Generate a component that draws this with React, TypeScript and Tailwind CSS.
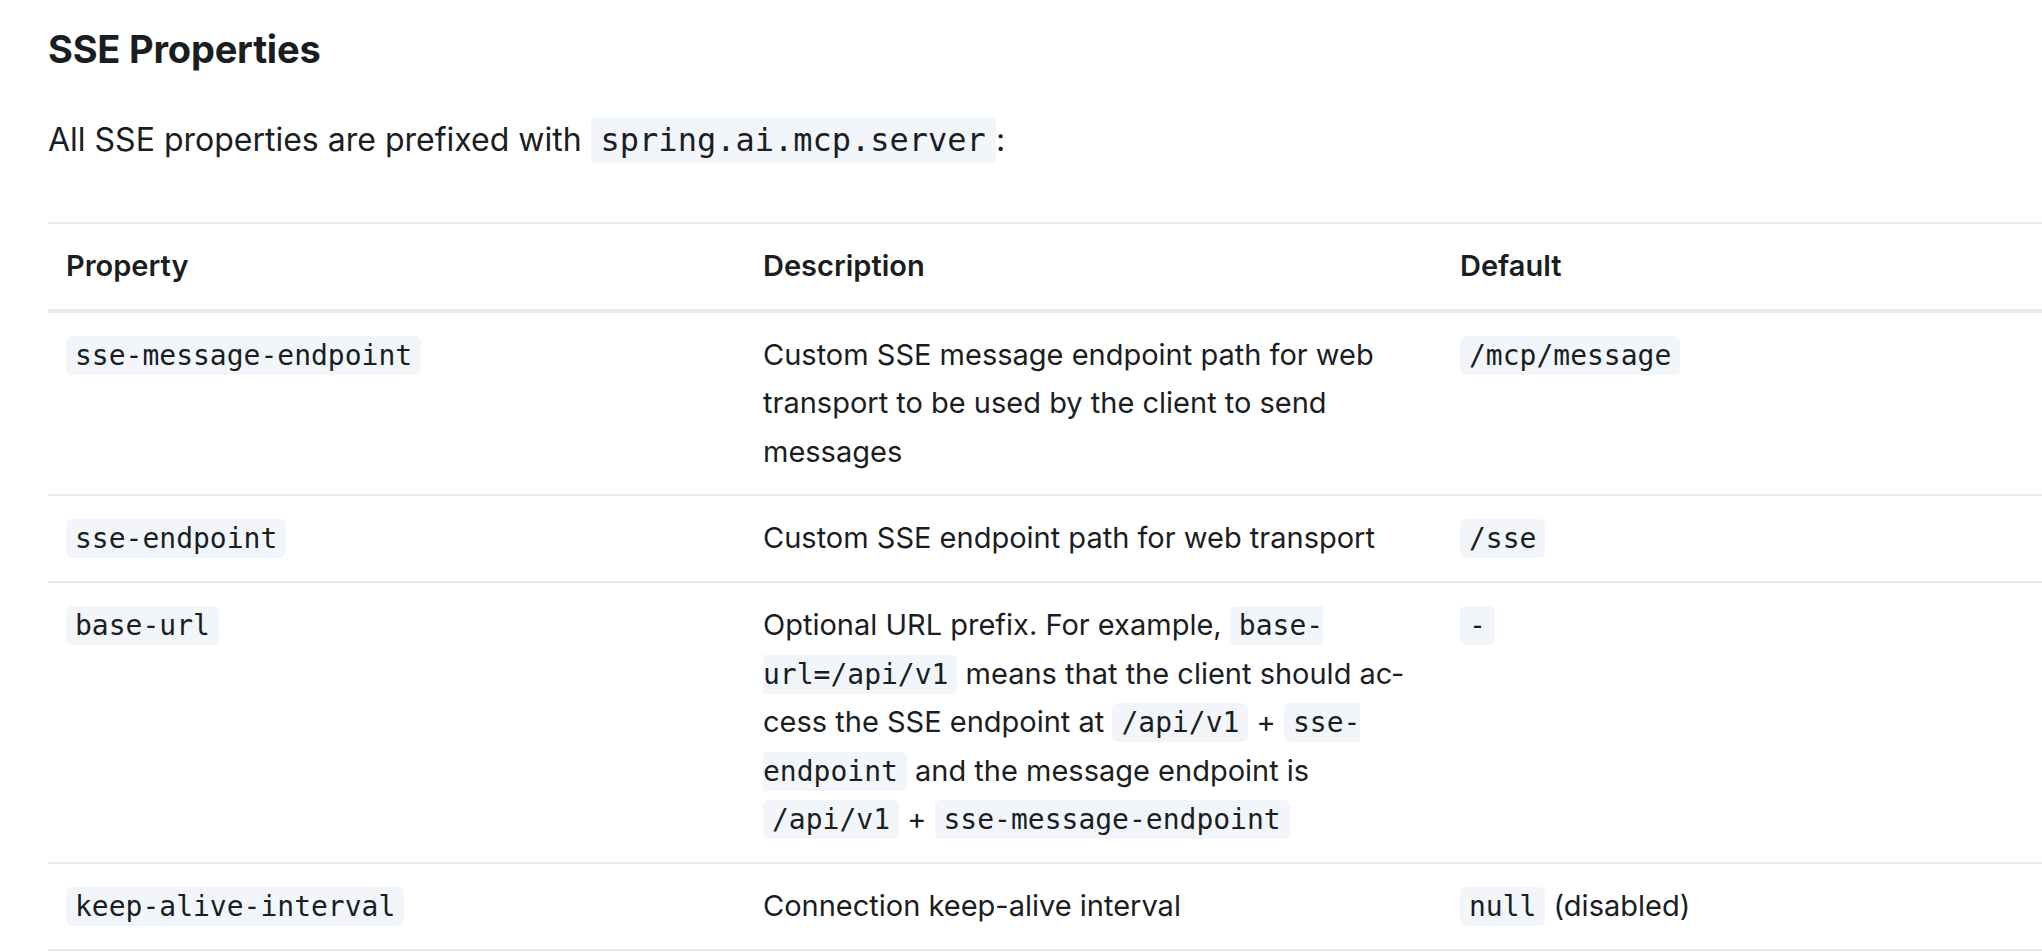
import React from "react";

const styleTh = "px-[18px] py-[18px] text-left font-semibold";
const styleTd = "px-[18px] py-[18px] align-top";
const codeTable =
  "rounded-[6px] bg-[#f2f6fa] px-[9px] py-[3px] font-['DejaVu_Sans_Mono',monospace] text-[28px] leading-none text-[#1b1e1f]";

function Code({ children }: { children: React.ReactNode }) {
  return <code className={codeTable}>{children}</code>;
}

const rows = [
  {
    name: "sse-message-endpoint",
    description: (
      <>
        Custom SSE message endpoint path for web transport to be used by the
        client to send messages
      </>
    ),
    def: <Code>/mcp/message</Code>,
  },
  {
    name: "sse-endpoint",
    description: <>Custom SSE endpoint path for web transport</>,
    def: <Code>/sse</Code>,
  },
  {
    name: "base-url",
    description: (
      <>
        Optional URL prefix. For example, <Code>base-url=/api/v1</Code> means
        that the client should ac{"\u00AD"}cess the SSE endpoint at{" "}
        <Code>/api/v1</Code> + <Code>sse-endpoint</Code> and the message
        endpoint is <Code>/api/v1</Code> + <Code>sse-message-endpoint</Code>
      </>
    ),
    def: <Code>-</Code>,
  },
  {
    name: "keep-alive-interval",
    description: <>Connection keep-alive interval</>,
    def: (
      <>
        <Code>null</Code> (disabled)
      </>
    ),
  },
];

export default function App() {
  return (
    <div className="w-full overflow-hidden bg-white font-['Inter',sans-serif] text-[#1b1e1f]">
      <div className="pl-[48px]">
        {/* Titulo da secao */}
        <h3 className="mt-[25px] text-[38px] leading-[48px] font-bold tracking-[-0.2px]">
          SSE Properties
        </h3>
        <p className="mt-[43px] text-[32px] leading-[48px]">
          All SSE properties are prefixed with{" "}
          <code className="rounded-[6px] bg-[#f2f6fa] px-[10px] py-[4px] font-['DejaVu_Sans_Mono',monospace] text-[32px] leading-none">
            spring.ai.mcp.server
          </code>
          :
        </p>

        {/* Tabela de propriedades */}
        <table className="mt-[58px] w-[2091px] table-fixed border-collapse text-[29px] leading-[48.6px]">
          <colgroup>
            <col className="w-[697px]" />
            <col className="w-[697px]" />
            <col className="w-[697px]" />
          </colgroup>
          <thead>
            <tr className="border-t-2 border-b-4 border-[#ebebef]">
              <th className={styleTh}>Property</th>
              <th className={styleTh}>Description</th>
              <th className={styleTh}>Default</th>
            </tr>
          </thead>
          <tbody>
            {rows.map((item, indice) => (
              <tr key={indice} className="border-b-2 border-[#ebebef]">
                <td className={styleTd}>
                  <Code>{item.name}</Code>
                </td>
                <td className={styleTd}>{item.description}</td>
                <td className={styleTd}>{item.def}</td>
              </tr>
            ))}
          </tbody>
        </table>
      </div>
    </div>
  );
}
